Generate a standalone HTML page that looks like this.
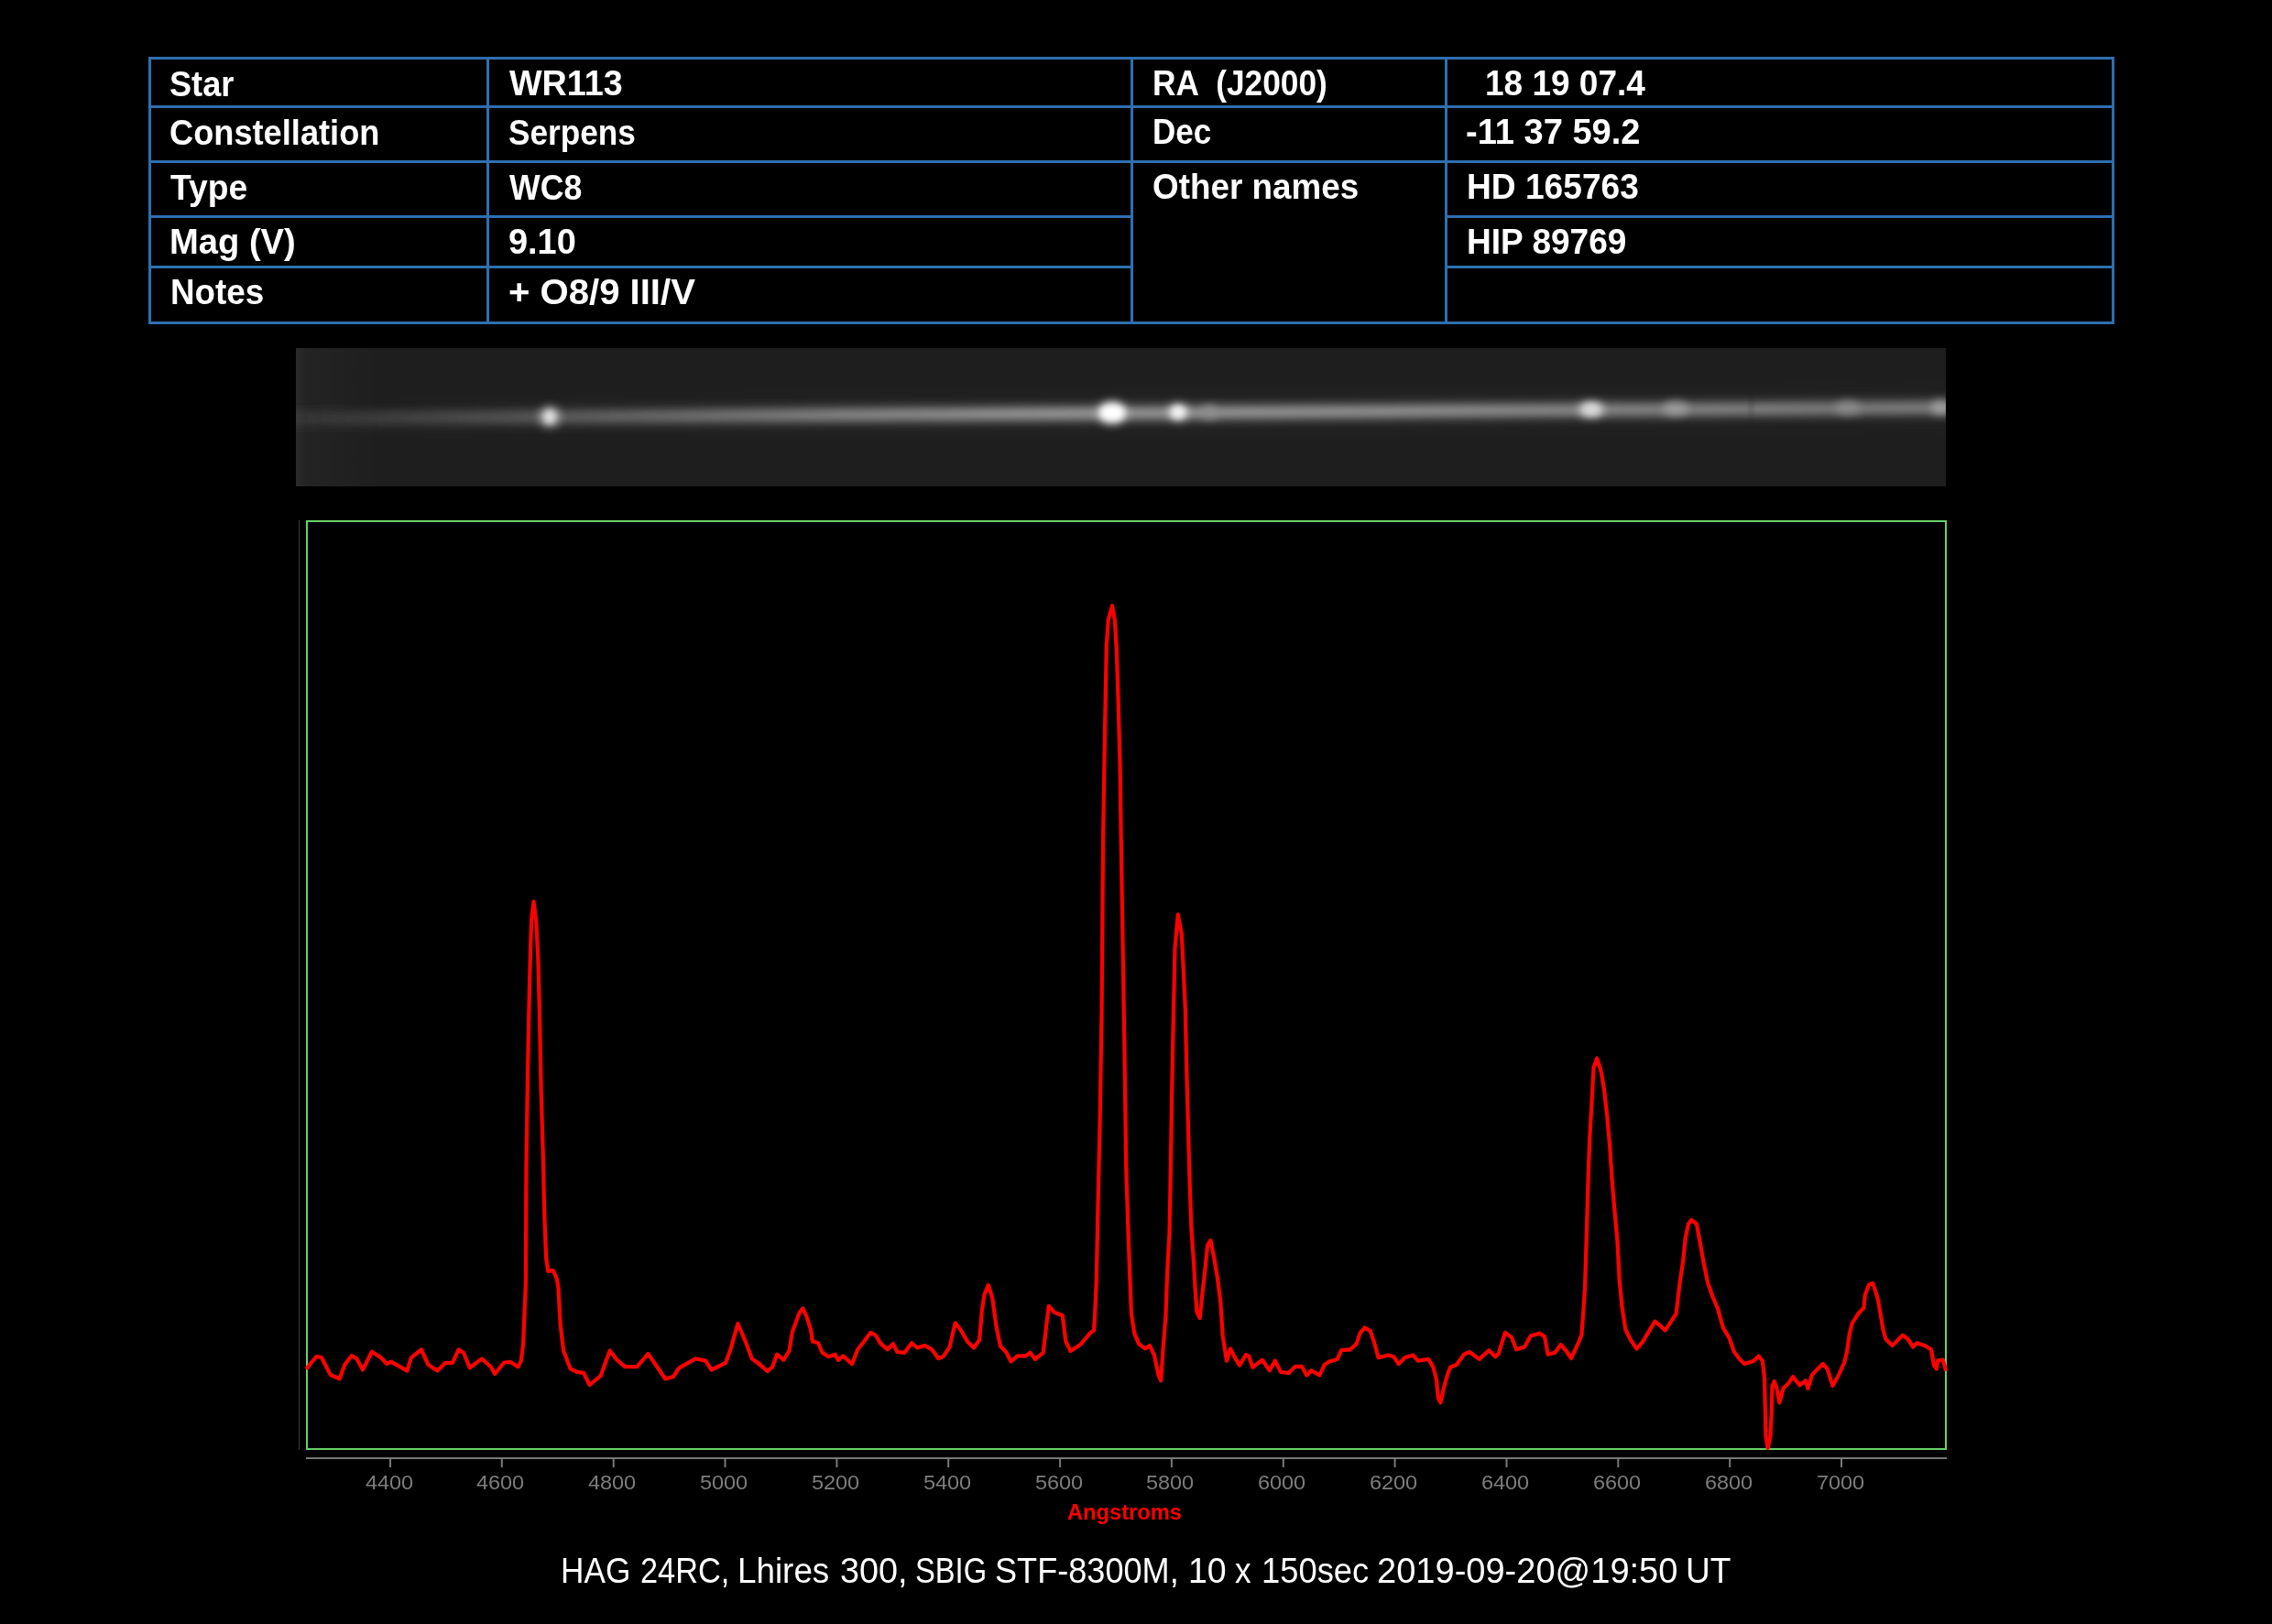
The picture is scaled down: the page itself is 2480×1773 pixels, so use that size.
<!DOCTYPE html>
<html><head><meta charset="utf-8"><style>
html,body{margin:0;padding:0;background:#000;width:2480px;height:1773px;overflow:hidden;position:relative}
.b{position:absolute;background:#2e6fb0}
.t{position:absolute;font-family:"Liberation Sans",sans-serif;font-weight:bold;font-size:39px;color:#fff;line-height:0;white-space:pre;transform-origin:0 0}
.cp{position:absolute;top:1715.4px;font-family:"Liberation Sans",sans-serif;font-size:38px;color:#fff;line-height:0;white-space:pre;transform-origin:0 0}
.ax{position:absolute;width:400px;text-align:center;transform:scaleX(1.067);transform-origin:200px 0;font-family:"Liberation Sans",sans-serif;font-size:22px;color:#7d7d7d;line-height:0;white-space:pre}
</style></head><body>
<div class="b" style="left:162px;top:62px;width:2146px;height:3px"></div><div class="b" style="left:162px;top:351px;width:2146px;height:3px"></div><div class="b" style="left:162px;top:62px;width:3px;height:292px"></div><div class="b" style="left:2305px;top:62px;width:3px;height:292px"></div><div class="b" style="left:531px;top:62px;width:3px;height:292px"></div><div class="b" style="left:1234px;top:62px;width:3px;height:292px"></div><div class="b" style="left:1577px;top:62px;width:3px;height:292px"></div><div class="b" style="left:162px;top:115px;width:1075px;height:3px"></div><div class="b" style="left:162px;top:175px;width:1075px;height:3px"></div><div class="b" style="left:162px;top:235px;width:1075px;height:3px"></div><div class="b" style="left:162px;top:290px;width:1075px;height:3px"></div><div class="b" style="left:1234px;top:115px;width:1074px;height:3px"></div><div class="b" style="left:1234px;top:175px;width:1074px;height:3px"></div><div class="b" style="left:1577px;top:235px;width:731px;height:3px"></div><div class="b" style="left:1577px;top:290px;width:731px;height:3px"></div>
<div class="t" style="left:184.8px;top:91.7px;transform:scaleX(0.9267)">Star</div><div class="t" style="left:185.2px;top:144.6px;transform:scaleX(0.9287)">Constellation</div><div class="t" style="left:185.6px;top:204.5px;transform:scaleX(0.9563)">Type</div><div class="t" style="left:185.2px;top:264.4px;transform:scaleX(0.9781)">Mag (V)</div><div class="t" style="left:185.9px;top:319.4px;transform:scaleX(0.9438)">Notes</div><div class="t" style="left:555.8px;top:91.2px;transform:scaleX(0.9669)">WR113</div><div class="t" style="left:554.9px;top:144.5px;transform:scaleX(0.9020)">Serpens</div><div class="t" style="left:556.4px;top:204.5px;transform:scaleX(0.9140)">WC8</div><div class="t" style="left:555.4px;top:264.4px;transform:scaleX(0.9716)">9.10</div><div class="t" style="left:555.4px;top:319.0px;transform:scaleX(1.0279)">+ O8/9 III/V</div><div class="t" style="left:1257.7px;top:91.2px;transform:scaleX(0.9043)">RA  (J2000)</div><div class="t" style="left:1258.0px;top:144.1px;transform:scaleX(0.8971)">Dec</div><div class="t" style="left:1258.1px;top:204.1px;transform:scaleX(0.9445)">Other names</div><div class="t" style="left:1621.0px;top:91.0px;transform:scaleX(0.9486)">18 19 07.4</div><div class="t" style="left:1600.1px;top:144.1px;transform:scaleX(0.9762)">-11 37 59.2</div><div class="t" style="left:1601.0px;top:204.1px;transform:scaleX(0.9521)">HD 165763</div><div class="t" style="left:1601.0px;top:264.2px;transform:scaleX(0.9500)">HIP 89769</div>
<svg width="2480" height="1773" style="position:absolute;left:0;top:0">
<defs>
<filter id="bl1" x="-5%" y="-200%" width="110%" height="500%"><feGaussianBlur stdDeviation="3 6"/></filter>
<filter id="bl2" x="-100%" y="-100%" width="300%" height="300%"><feGaussianBlur stdDeviation="5"/></filter>
<filter id="bl4" x="-5%" y="-300%" width="110%" height="700%"><feGaussianBlur stdDeviation="3 12"/></filter>
<filter id="bl3" x="-100%" y="-100%" width="300%" height="300%"><feGaussianBlur stdDeviation="3"/></filter>
<linearGradient id="bandg" x1="323" y1="0" x2="2124" y2="0" gradientUnits="userSpaceOnUse">
<stop offset="0" stop-color="#343434"/><stop offset="0.054" stop-color="#474747"/><stop offset="0.154" stop-color="#686868"/>
<stop offset="0.33" stop-color="#9b9b9b"/><stop offset="0.459" stop-color="#b1b1b1"/><stop offset="0.653" stop-color="#aaaaaa"/><stop offset="0.93" stop-color="#919191"/><stop offset="1" stop-color="#949494"/>
</linearGradient>
<linearGradient id="ledge" x1="0" y1="0" x2="1" y2="0"><stop offset="0" stop-color="#ffffff" stop-opacity="0.06"/><stop offset="0.12" stop-color="#ffffff" stop-opacity="0.025"/><stop offset="1" stop-color="#ffffff" stop-opacity="0"/></linearGradient>
<clipPath id="stripclip"><rect x="323" y="380" width="1801" height="151"/></clipPath>
</defs>
<rect x="323" y="380" width="1801" height="151" fill="#1e1e1e"/>
<g clip-path="url(#stripclip)">
<line x1="300" y1="457" x2="2150" y2="445" stroke="url(#bandg)" stroke-width="26" opacity="0.08" filter="url(#bl4)"/>
<line x1="300" y1="457" x2="2150" y2="445" stroke="url(#bandg)" stroke-width="12" filter="url(#bl1)"/>
<ellipse cx="600" cy="455" rx="12" ry="12" fill="#ffffff" opacity="0.45" filter="url(#bl2)"/>
<ellipse cx="600" cy="455" rx="6" ry="7" fill="#e0e0e0" filter="url(#bl3)"/>
<ellipse cx="1214" cy="450.5" rx="16" ry="13" fill="#ffffff" opacity="0.7" filter="url(#bl2)"/>
<ellipse cx="1214" cy="450.5" rx="12" ry="8" fill="#ffffff" filter="url(#bl3)"/>
<ellipse cx="1286" cy="450" rx="11" ry="10" fill="#ffffff" opacity="0.6" filter="url(#bl2)"/>
<ellipse cx="1286" cy="450" rx="7" ry="6" fill="#f4f4f4" filter="url(#bl3)"/>
<ellipse cx="1320" cy="450" rx="9" ry="8" fill="#909090" opacity="0.7" filter="url(#bl2)"/>
<ellipse cx="1737" cy="447" rx="14" ry="9" fill="#e0e0e0" opacity="0.8" filter="url(#bl2)"/>
<ellipse cx="1737" cy="447" rx="8" ry="5" fill="#d8d8d8" filter="url(#bl3)"/>
<ellipse cx="1829" cy="446" rx="14" ry="8" fill="#a8a8a8" opacity="0.7" filter="url(#bl2)"/>
<ellipse cx="2017" cy="445" rx="14" ry="8" fill="#989898" opacity="0.6" filter="url(#bl2)"/>
<ellipse cx="2118" cy="445" rx="10" ry="8" fill="#b0b0b0" opacity="0.7" filter="url(#bl2)"/>
<rect x="323" y="380" width="90" height="151" fill="url(#ledge)"/>
<rect x="1910" y="432" width="3" height="26" fill="#1a1a1a" opacity="0.35" filter="url(#bl3)"/>
</g>
<rect x="326" y="568" width="1" height="1015" fill="#3c3c3c"/>
<rect x="335" y="569" width="1789" height="1013" fill="none" stroke="#68d068" stroke-width="2"/>
<rect x="334" y="1591" width="1791" height="2" fill="#787878"/>
<rect x="425.0" y="1592" width="2" height="10" fill="#787878"/><rect x="546.8" y="1592" width="2" height="10" fill="#787878"/><rect x="668.7" y="1592" width="2" height="10" fill="#787878"/><rect x="790.5" y="1592" width="2" height="10" fill="#787878"/><rect x="912.4" y="1592" width="2" height="10" fill="#787878"/><rect x="1034.2" y="1592" width="2" height="10" fill="#787878"/><rect x="1156.1" y="1592" width="2" height="10" fill="#787878"/><rect x="1277.9" y="1592" width="2" height="10" fill="#787878"/><rect x="1399.8" y="1592" width="2" height="10" fill="#787878"/><rect x="1521.6" y="1592" width="2" height="10" fill="#787878"/><rect x="1643.5" y="1592" width="2" height="10" fill="#787878"/><rect x="1765.3" y="1592" width="2" height="10" fill="#787878"/><rect x="1887.2" y="1592" width="2" height="10" fill="#787878"/><rect x="2009.0" y="1592" width="2" height="10" fill="#787878"/>
<path d="M335.5,1493.0 L345.4,1481.0 L350.9,1482.0 L360.8,1501.0 L370.7,1505.4 L376.2,1490.0 L383.9,1480.0 L389.4,1483.4 L396.0,1495.5 L405.9,1475.7 L415.8,1482.3 L422.4,1489.0 L426.8,1486.7 L444.4,1496.6 L448.8,1482.3 L459.8,1473.5 L467.5,1490.0 L477.4,1496.6 L486.3,1487.8 L494.0,1487.8 L500.6,1473.5 L506.0,1476.8 L512.7,1493.3 L525.9,1483.4 L535.8,1492.2 L540.2,1500.0 L550.0,1487.8 L556.7,1486.7 L565.5,1492.2 L568.8,1485.6 L571.0,1468.0 L572.0,1446.0 L573.9,1400.0 L574.4,1277.0 L576.0,1171.0 L577.9,1079.0 L580.1,1003.4 L582.5,984.4 L585.3,1006.0 L587.4,1048.0 L588.8,1099.6 L590.7,1193.0 L592.8,1262.0 L594.2,1324.5 L596.1,1373.3 L598.3,1388.0 L603.7,1386.8 L607.7,1396.0 L609.5,1406.4 L611.7,1446.0 L615.0,1474.6 L622.7,1494.4 L629.3,1497.7 L637.0,1498.8 L643.6,1512.0 L655.7,1502.0 L660.1,1490.0 L665.6,1474.6 L673.3,1484.5 L682.1,1492.2 L695.3,1492.2 L707.4,1478.0 L717.3,1492.2 L726.1,1505.4 L734.9,1503.0 L741.5,1493.3 L759.1,1483.4 L770.1,1485.6 L776.7,1495.5 L792.1,1487.8 L797.7,1472.4 L805.4,1445.0 L814.2,1465.8 L820.8,1483.4 L829.6,1490.0 L827.0,1487.4 L837.6,1497.0 L842.9,1492.7 L848.2,1478.6 L855.2,1484.8 L861.4,1475.0 L864.9,1454.0 L872.8,1432.8 L876.3,1428.4 L880.7,1438.0 L885.1,1452.2 L886.9,1464.5 L893.1,1466.3 L897.5,1476.8 L904.5,1481.2 L911.5,1478.6 L915.0,1484.8 L920.4,1480.4 L930.0,1489.2 L936.2,1473.3 L943.2,1464.5 L950.3,1454.8 L955.6,1457.5 L960.8,1466.3 L968.8,1473.3 L975.0,1467.1 L979.3,1476.0 L987.3,1476.8 L995.2,1466.3 L1001.3,1471.5 L1009.3,1468.9 L1017.2,1473.3 L1024.2,1483.0 L1029.5,1481.2 L1036.5,1470.7 L1042.7,1444.3 L1048.9,1452.2 L1055.9,1464.5 L1063.0,1471.5 L1069.1,1462.7 L1071.8,1431.0 L1074.4,1413.5 L1078.8,1402.9 L1083.2,1417.0 L1087.6,1448.7 L1092.0,1469.8 L1098.2,1476.0 L1103.5,1486.5 L1110.5,1480.4 L1119.3,1480.4 L1124.6,1476.8 L1129.9,1483.9 L1138.7,1476.8 L1142.2,1446.9 L1144.8,1425.8 L1151.0,1432.8 L1159.8,1436.3 L1163.3,1464.5 L1168.6,1475.0 L1179.2,1468.0 L1189.7,1455.7 L1194.1,1452.2 L1195.0,1438.0 L1196.8,1397.6 L1198.3,1324.3 L1200.6,1224.5 L1202.6,1101.4 L1204.1,913.4 L1206.0,798.6 L1207.8,705.0 L1209.7,676.8 L1214.0,661.2 L1216.8,676.8 L1218.8,709.4 L1220.5,760.4 L1222.5,832.6 L1224.2,947.4 L1225.9,1050.8 L1227.6,1158.0 L1229.2,1274.4 L1231.6,1347.6 L1233.2,1390.8 L1234.9,1434.0 L1238.2,1455.7 L1243.2,1467.4 L1249.9,1472.4 L1254.9,1469.0 L1259.8,1479.0 L1264.8,1502.3 L1267.2,1507.3 L1269.8,1469.0 L1272.5,1435.8 L1274.1,1389.2 L1276.5,1346.0 L1277.5,1294.4 L1279.1,1196.2 L1280.8,1111.4 L1282.5,1034.9 L1285.8,998.3 L1289.8,1019.9 L1291.4,1051.5 L1293.8,1101.4 L1295.4,1174.6 L1297.1,1236.2 L1298.8,1296.0 L1300.4,1341.0 L1303.1,1379.2 L1304.7,1409.1 L1306.4,1432.4 L1309.7,1439.1 L1312.4,1412.5 L1314.7,1392.5 L1318.1,1359.2 L1321.4,1354.3 L1325.4,1374.2 L1329.0,1395.8 L1332.4,1422.4 L1334.7,1459.0 L1339.0,1485.6 L1343.0,1472.4 L1348.0,1482.3 L1353.0,1490.6 L1360.0,1479.0 L1363.0,1480.4 L1367.3,1492.7 L1377.9,1484.8 L1385.8,1496.2 L1391.9,1485.6 L1398.1,1498.0 L1406.9,1498.8 L1413.9,1491.8 L1421.0,1491.8 L1426.3,1501.5 L1431.5,1496.2 L1440.4,1501.5 L1445.6,1490.0 L1450.9,1486.5 L1459.7,1483.9 L1464.1,1474.2 L1473.8,1473.3 L1480.8,1467.1 L1484.4,1455.7 L1489.6,1449.5 L1495.8,1453.1 L1500.2,1466.3 L1504.6,1482.1 L1516.1,1479.5 L1521.3,1481.2 L1526.6,1489.2 L1533.7,1482.1 L1542.5,1479.5 L1547.7,1485.6 L1559.2,1483.9 L1564.5,1492.7 L1568.0,1506.8 L1569.8,1526.1 L1572.4,1531.4 L1575.9,1515.6 L1580.3,1499.7 L1583.0,1492.7 L1590.0,1490.0 L1597.9,1478.6 L1604.1,1476.0 L1614.6,1483.9 L1625.2,1474.2 L1632.3,1481.2 L1635.8,1477.7 L1642.8,1454.8 L1649.9,1460.1 L1655.1,1473.3 L1663.9,1470.7 L1671.0,1458.3 L1680.7,1455.7 L1686.0,1459.2 L1689.5,1478.6 L1697.4,1476.8 L1703.6,1468.0 L1709.7,1475.0 L1715.0,1483.0 L1722.0,1468.0 L1726.4,1457.5 L1728.2,1432.8 L1730.0,1406.4 L1731.7,1351.7 L1733.3,1296.3 L1735.0,1247.5 L1737.7,1198.7 L1739.5,1165.5 L1743.2,1155.5 L1747.7,1169.9 L1751.0,1189.9 L1754.3,1218.7 L1757.2,1252.0 L1759.4,1285.2 L1762.1,1318.5 L1765.4,1354.0 L1767.6,1396.1 L1770.5,1427.1 L1774.3,1451.5 L1779.8,1462.6 L1786.5,1472.6 L1793.1,1464.8 L1799.8,1453.7 L1806.4,1442.6 L1812.0,1447.1 L1817.5,1452.6 L1824.2,1442.6 L1829.7,1433.8 L1833.0,1405.0 L1837.5,1373.9 L1839.7,1351.7 L1843.0,1336.2 L1846.3,1331.8 L1851.9,1336.2 L1855.2,1354.0 L1859.6,1378.3 L1864.1,1400.5 L1869.6,1416.0 L1875.2,1429.3 L1880.7,1449.3 L1887.4,1460.4 L1892.9,1475.9 L1899.6,1484.8 L1904.1,1488.9 L1914.0,1486.0 L1919.7,1480.4 L1923.9,1486.0 L1926.0,1504.5 L1927.5,1568.2 L1929.6,1581.0 L1932.4,1568.2 L1933.8,1541.3 L1934.5,1513.0 L1936.7,1508.0 L1939.5,1515.8 L1942.3,1531.4 L1946.6,1515.8 L1952.2,1510.1 L1957.2,1503.0 L1964.3,1512.3 L1970.7,1507.3 L1973.5,1515.8 L1977.7,1501.6 L1982.0,1496.7 L1989.8,1488.9 L1994.7,1494.6 L2000.4,1513.0 L2007.5,1500.2 L2013.1,1487.5 L2016.0,1476.1 L2018.8,1456.3 L2021.6,1445.0 L2028.7,1433.7 L2034.4,1428.0 L2035.8,1413.8 L2040.1,1402.5 L2044.3,1401.1 L2047.1,1409.6 L2050.0,1419.5 L2055.6,1452.1 L2058.5,1462.0 L2065.6,1469.1 L2071.2,1463.4 L2076.9,1457.7 L2082.5,1462.0 L2088.2,1470.5 L2092.5,1466.2 L2101.0,1469.1 L2108.0,1473.3 L2110.9,1490.3 L2113.7,1494.6 L2115.1,1485.4 L2120.8,1484.6 L2123.6,1494.6" fill="none" stroke="#ff0000" stroke-width="4.2" stroke-linejoin="round" stroke-linecap="square"/>
</svg>
<div class="ax" style="left:224.5px;top:1619px">4400</div><div class="ax" style="left:346.3px;top:1619px">4600</div><div class="ax" style="left:468.2px;top:1619px">4800</div><div class="ax" style="left:590.0px;top:1619px">5000</div><div class="ax" style="left:711.9px;top:1619px">5200</div><div class="ax" style="left:833.7px;top:1619px">5400</div><div class="ax" style="left:955.6px;top:1619px">5600</div><div class="ax" style="left:1077.4px;top:1619px">5800</div><div class="ax" style="left:1199.3px;top:1619px">6000</div><div class="ax" style="left:1321.1px;top:1619px">6200</div><div class="ax" style="left:1443.0px;top:1619px">6400</div><div class="ax" style="left:1564.8px;top:1619px">6600</div><div class="ax" style="left:1686.7px;top:1619px">6800</div><div class="ax" style="left:1808.5px;top:1619px">7000</div>
<div style="position:absolute;left:1165.2px;top:1651px;font-family:'Liberation Sans',sans-serif;font-weight:bold;font-size:23px;color:#ff0000;line-height:0;white-space:pre;transform-origin:0 0;transform:scaleX(1.03)">Angstroms</div>
<div class="cp" style="left:612.2px;transform:scaleX(0.9260)">HAG</div><div class="cp" style="left:698.9px;transform:scaleX(0.9029)">24RC,</div><div class="cp" style="left:805.4px;transform:scaleX(0.9687)">Lhires</div><div class="cp" style="left:916.8px;transform:scaleX(0.9929)">300,</div><div class="cp" style="left:998.5px;transform:scaleX(0.8605)">SBIG</div><div class="cp" style="left:1086.3px;transform:scaleX(0.9505)">STF-8300M,</div><div class="cp" style="left:1297.2px;transform:scaleX(0.9868)">10</div><div class="cp" style="left:1348.3px;transform:scaleX(0.9278)">x</div><div class="cp" style="left:1376.9px;transform:scaleX(0.9563)">150sec</div><div class="cp" style="left:1503.3px;transform:scaleX(1.0012)">2019-09-20@19:50</div><div class="cp" style="left:1839.5px;transform:scaleX(0.9766)">UT</div>
</body></html>
